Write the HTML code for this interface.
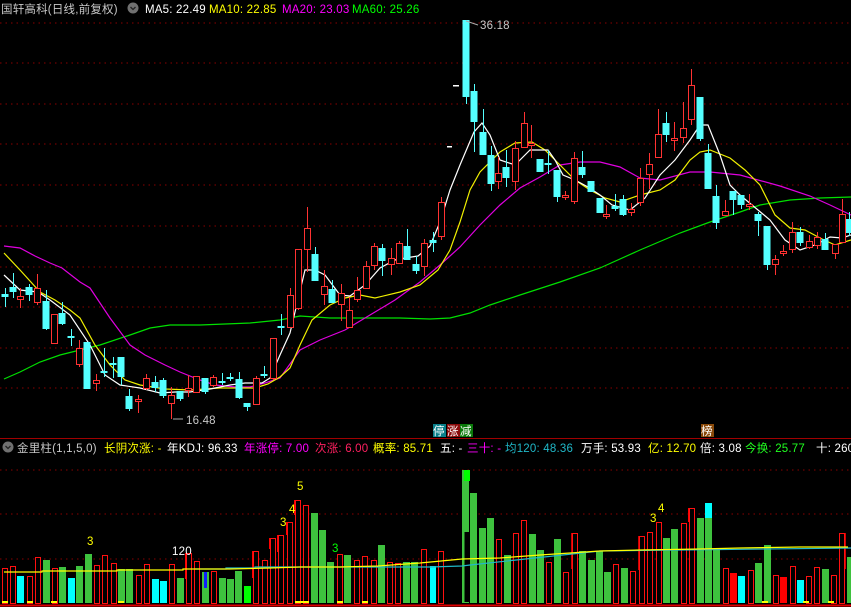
<!DOCTYPE html>
<html><head><meta charset="utf-8"><style>
html,body{margin:0;padding:0;background:#000;width:851px;height:607px;overflow:hidden}
svg{display:block}
text{font-family:"Liberation Sans","Noto Sans CJK SC",sans-serif;font-size:11.5px;letter-spacing:0.2px}
.r{fill:#000;stroke:#ff3232;stroke-width:1}
.c{fill:#54ffff}
.vr{fill:#000;stroke:#ff1010;stroke-width:1}
.vg{fill:#3ec23e}
.vc{fill:#00ffff}
.vf{fill:#ff0000}
.vd{fill:#d00000}
</style></head><body>
<svg width="851" height="607" viewBox="0 0 851 607" xmlns="http://www.w3.org/2000/svg">
<g stroke="#8a0000" stroke-dasharray="1.5,4" stroke-width="1">
<line x1="0" y1="23" x2="851" y2="23"/><line x1="0" y1="63" x2="851" y2="63"/><line x1="0" y1="104" x2="851" y2="104"/><line x1="0" y1="144" x2="851" y2="144"/><line x1="0" y1="185" x2="851" y2="185"/><line x1="0" y1="226" x2="851" y2="226"/><line x1="0" y1="267" x2="851" y2="267"/><line x1="0" y1="307" x2="851" y2="307"/><line x1="0" y1="348" x2="851" y2="348"/><line x1="0" y1="388" x2="851" y2="388"/>
<line x1="0" y1="470" x2="851" y2="470"/><line x1="0" y1="514" x2="851" y2="514"/><line x1="0" y1="559" x2="851" y2="559"/>
</g>
<line x1="0" y1="438.5" x2="851" y2="438.5" stroke="#a00000"/>
<line x1="0" y1="605.5" x2="851" y2="605.5" stroke="#e00000" stroke-width="2"/>

<polyline fill="none" stroke="#00e000" stroke-width="1.2" points="4,379 20,372 40,362 60,355 80,350 100,345 130,335 150,328 170,325 200,325 250,323 280,320 300,316 330,318 360,318 400,318 430,319 450,318 470,313 490,305 520,295 560,282 600,268 640,250 680,233 710,222 740,212 760,205 790,200 820,198 851,197"/>
<polyline fill="none" stroke="#e000e0" stroke-width="1.2" points="4,246 20,248 35,256 50,263 62,268 80,282 90,288 110,318 130,345 145,355 165,365 180,372 200,380 215,385 235,387 250,387 265,383 280,378 300,350 320,340 345,330 370,315 395,300 420,282 440,265 460,247 480,225 500,205 520,188 540,177 560,165 580,162 600,162 620,167 640,178 660,180 690,172 710,172 740,175 780,186 810,196 830,205 851,215"/>
<polyline fill="none" stroke="#f0f000" stroke-width="1.2" points="4,253 20,270 40,292 55,300 70,310 80,318 95,345 110,365 125,380 140,385 165,389 190,390 220,388 240,388 255,388 268,384 280,377 290,368 300,345 312,320 330,305 345,298 360,295 375,298 400,292 420,285 438,270 450,250 460,222 470,190 480,172 500,152 515,143 532,142 545,150 560,165 575,180 590,190 605,198 620,202 640,195 660,190 675,180 690,160 700,152 710,150 730,158 745,170 760,185 775,215 790,228 805,230 820,238 835,245 851,240"/>
<polyline fill="none" stroke="#ffffff" stroke-width="1.2" points="4,275 20,290 38,292 50,300 70,315 90,345 105,375 120,385 140,388 160,393 175,392 190,392 210,389 230,385 245,383 262,383 270,378 280,355 290,333 305,270 315,270 325,275 340,295 350,296 365,285 380,268 395,260 405,258 418,256 430,246 440,222 450,190 460,165 474,132 482,123 490,135 500,160 515,165 530,150 548,150 555,160 563,175 575,180 588,187 600,195 612,205 630,210 645,198 660,175 675,160 690,140 700,125 708,125 720,155 730,185 740,195 758,210 770,220 785,240 800,250 815,245 830,237 842,238 851,235"/>

<g transform="translate(0.5,0)">
<path stroke="#54ffff" stroke-width="1" d="M5,288V307M13,273V298M29,284V301M46,290V330M62,302V325M71,329V346M87,342V389M104,348V377M113,357V378M121,357V385M129,389V411M155,376V392M163,378V398M180,391V401M205,378V394M222,373V385M230,373V381M239,372V399M247,403V411M264,366V378M281,314V335M315,247V281M332,280V303M382,244V276M407,229V260M416,256V274M433,232V252M466,20V104M474,84V152M483,109V155M491,146V191M506,150V187M540,159V172M548,150V174M557,170V202M582,151V178M591,181V192M600,198V213M615,194V211M623,195V216M666,112V142M700,97V141M708,144V189M716,185V229M733,191V215M741,195V209M758,212V236M767,226V270M800,227V246M825,233V250M849,212V236"/>
<path stroke="#ff3232" stroke-width="1" d="M20,288V308M37,274V305M54,314V343M79,340V367M96,374V391M138,395V413M146,374V390M171,387V419M188,375V397M196,376V393M213,375V387M256,376V405M273,338V380M290,288V327M298,249V310M307,207V272M324,270V305M341,284V321M349,297V327M357,277V302M366,261V288M374,243V270M391,248V275M399,241V263M424,239V276M441,197V240M498,157V189M515,141V190M524,112V147M531,125V158M565,191V200M574,152V204M606,205V219M631,203V216M640,168V206M649,153V189M658,109V157M674,122V151M683,102V143M691,69V125M725,200V215M749,194V210M775,255V275M783,245V256M792,222V253M809,235V249M817,232V249M835,244V259M842,199V243"/>
</g>

<g class="c">
<rect x="1.5" y="294" width="7" height="3"/><rect x="9.5" y="287" width="7" height="5"/><rect x="25.5" y="287" width="7" height="8"/><rect x="42.5" y="301" width="7" height="28"/><rect x="58.5" y="313" width="7" height="11"/><rect x="67.5" y="336" width="7" height="2"/><rect x="83.5" y="342" width="7" height="47"/><rect x="100.5" y="371" width="7" height="2"/><rect x="109.5" y="363" width="7" height="2"/><rect x="117.5" y="357" width="7" height="20"/><rect x="125.5" y="396" width="7" height="13"/><rect x="151.5" y="382" width="7" height="6"/><rect x="159.5" y="380" width="7" height="16"/><rect x="176.5" y="391" width="7" height="8"/><rect x="201.5" y="378" width="7" height="14"/><rect x="218.5" y="381" width="7" height="2"/><rect x="226.5" y="377" width="7" height="2"/><rect x="235.5" y="379" width="7" height="19"/><rect x="243.5" y="403" width="7" height="4"/><rect x="260.5" y="374" width="7" height="2"/><rect x="277.5" y="326" width="7" height="2"/><rect x="311.5" y="254" width="7" height="27"/><rect x="328.5" y="289" width="7" height="14"/><rect x="378.5" y="248" width="7" height="13"/><rect x="403.5" y="246" width="7" height="14"/><rect x="412.5" y="264" width="7" height="7"/><rect x="429.5" y="240" width="7" height="3"/>
<rect x="462.5" y="20" width="7" height="77"/><rect x="470.5" y="91" width="7" height="31"/><rect x="479.5" y="132" width="7" height="23"/><rect x="487.5" y="155" width="7" height="29"/><rect x="502.5" y="167" width="7" height="11"/><rect x="536.5" y="159" width="7" height="13"/><rect x="544.5" y="163" width="7" height="2"/><rect x="553.5" y="170" width="7" height="27"/><rect x="578.5" y="167" width="7" height="8"/><rect x="587.5" y="181" width="7" height="11"/><rect x="596.5" y="198" width="7" height="15"/><rect x="611.5" y="206" width="7" height="3"/><rect x="619.5" y="199" width="7" height="16"/><rect x="662.5" y="123" width="7" height="12"/><rect x="696.5" y="97" width="7" height="42"/><rect x="704.5" y="153" width="7" height="36"/><rect x="712.5" y="196" width="7" height="27"/><rect x="729.5" y="191" width="7" height="9"/><rect x="737.5" y="195" width="7" height="10"/><rect x="754.5" y="214" width="7" height="7"/><rect x="763.5" y="226" width="7" height="39"/><rect x="796.5" y="232" width="7" height="11"/><rect x="821.5" y="239" width="7" height="11"/><rect x="845.5" y="219" width="7" height="14"/>
</g>
<g class="r" transform="translate(0.5,0.5)">
<rect x="17" y="296" width="6" height="3"/><rect x="34" y="288" width="6" height="14"/><rect x="51" y="314" width="6" height="29"/><rect x="76" y="348" width="6" height="16"/><rect x="93" y="380" width="6" height="3"/><rect x="135" y="399" width="6" height="2"/><rect x="143" y="378" width="6" height="10"/><rect x="168" y="395" width="6" height="8"/><rect x="185" y="388" width="6" height="2"/><rect x="193" y="376" width="6" height="16"/><rect x="210" y="377" width="6" height="8"/><rect x="253" y="378" width="6" height="26"/><rect x="270" y="338" width="6" height="40"/><rect x="287" y="295" width="6" height="32"/><rect x="295" y="249" width="6" height="59"/><rect x="304" y="228" width="6" height="21"/><rect x="321" y="286" width="6" height="8"/><rect x="338" y="293" width="6" height="11"/><rect x="346" y="310" width="6" height="17"/><rect x="354" y="290" width="6" height="9"/><rect x="363" y="266" width="6" height="22"/><rect x="371" y="246" width="6" height="19"/><rect x="388" y="258" width="6" height="6"/><rect x="396" y="243" width="6" height="20"/><rect x="421" y="243" width="6" height="23"/><rect x="438" y="202" width="6" height="34"/>
<rect x="495" y="173" width="6" height="8"/><rect x="512" y="148" width="6" height="33"/><rect x="521" y="123" width="6" height="24"/><rect x="528" y="143" width="6" height="2"/><rect x="562" y="195" width="6" height="2"/><rect x="571" y="158" width="6" height="43"/><rect x="603" y="214" width="6" height="2"/><rect x="628" y="209" width="6" height="3"/><rect x="637" y="178" width="6" height="24"/><rect x="646" y="164" width="6" height="10"/><rect x="655" y="134" width="6" height="23"/><rect x="671" y="138" width="6" height="2"/><rect x="680" y="128" width="6" height="9"/><rect x="688" y="85" width="6" height="34"/><rect x="722" y="211" width="6" height="4"/><rect x="746" y="204" width="6" height="2"/><rect x="772" y="259" width="6" height="5"/><rect x="780" y="251" width="6" height="2"/><rect x="789" y="232" width="6" height="17"/><rect x="806" y="241" width="6" height="6"/><rect x="814" y="237" width="6" height="8"/><rect x="832" y="244" width="6" height="9"/><rect x="839" y="214" width="6" height="28"/>
</g>
<g fill="#fff"><rect x="447" y="146" width="5" height="1.5"/><rect x="453" y="85" width="6" height="1.5"/></g>
<path d="M466,21 L478,25" stroke="#aaa" fill="none"/><text x="480" y="29" fill="#c8c8c8">36.18</text>
<path d="M173,419 L183,419" stroke="#aaa" fill="none"/><text x="186" y="424" fill="#c8c8c8">16.48</text>

<text x="1" y="13" fill="#c8c8c8">国轩高科(日线,前复权)</text>
<circle cx="133" cy="8" r="5.5" fill="#707070"/><path d="M130.5,7 L133,9.5 L135.5,7" stroke="#222" stroke-width="1.3" fill="none"/>
<text x="145" y="13" fill="#ffffff">MA5: 22.49</text>
<text x="209" y="13" fill="#ffff00">MA10: 22.85</text>
<text x="282" y="13" fill="#ff00ff">MA20: 23.03</text>
<text x="352" y="13" fill="#00ff00">MA60: 25.26</text>

<rect x="433" y="424" width="13" height="13" fill="#0a7f8a"/><text x="433" y="435" fill="#fff">停</text>
<rect x="447" y="424" width="13" height="13" fill="#8a0a0a"/><text x="447" y="435" fill="#fff">涨</text>
<rect x="460" y="424" width="13" height="13" fill="#0a7a0a"/><text x="460" y="435" fill="#fff">减</text>
<rect x="701" y="424" width="13" height="13" fill="#8a4a0a"/><text x="701" y="435" fill="#fff">榜</text>

<circle cx="8" cy="447" r="5.5" fill="#707070"/><path d="M5.5,446 L8,448.5 L10.5,446" stroke="#222" stroke-width="1.3" fill="none"/>
<text x="17" y="452" fill="#c8c8c8">金里柱(1,1,5,0)</text>
<text x="104" y="452" fill="#ffff00">长阴次涨: -</text>
<text x="167" y="452" fill="#ffffff">年KDJ: 96.33</text>
<text x="244" y="452" fill="#ff00ff">年涨停: 7.00</text>
<text x="315" y="452" fill="#ff2060">次涨: 6.00</text>
<text x="373" y="452" fill="#ffff00">概率: 85.71</text>
<text x="440" y="452" fill="#ffffff">五: -</text>
<text x="467" y="452" fill="#ff00ff">三十: -</text>
<text x="505" y="452" fill="#20b8c8">均120: 48.36</text>
<text x="581" y="452" fill="#ffffff">万手: 53.93</text>
<text x="648" y="452" fill="#ffff00">亿: 12.70</text>
<text x="700" y="452" fill="#ffffff">倍: 3.08</text>
<text x="745" y="452" fill="#20ff20">今换: 25.77</text>
<text x="816" y="452" fill="#ffffff">十: 260</text>

<g class="vg">
<rect x="43" y="560" width="7" height="43"/><rect x="59" y="567" width="7" height="36"/><rect x="76" y="566" width="7" height="37"/><rect x="85" y="554" width="7" height="49"/><rect x="118" y="569" width="7" height="34"/><rect x="126" y="569" width="7" height="34"/><rect x="177" y="578" width="7" height="25"/><rect x="202" y="572" width="7" height="31"/><rect x="219" y="578" width="7" height="25"/><rect x="227" y="579" width="7" height="24"/><rect x="235" y="571" width="7" height="32"/><rect x="311" y="513" width="7" height="90"/><rect x="319" y="530" width="7" height="73"/><rect x="327" y="562" width="7" height="41"/><rect x="344" y="555" width="7" height="48"/><rect x="378" y="545" width="7" height="58"/><rect x="403" y="562" width="7" height="41"/><rect x="411" y="562" width="7" height="41"/>
<rect x="462" y="470" width="7" height="133"/><rect x="470" y="493" width="7" height="110"/><rect x="479" y="528" width="7" height="75"/><rect x="487" y="518" width="7" height="85"/><rect x="504" y="555" width="7" height="48"/><rect x="529" y="534" width="7" height="69"/><rect x="537" y="550" width="7" height="53"/><rect x="554" y="539" width="7" height="64"/><rect x="579" y="551" width="7" height="52"/><rect x="588" y="560" width="7" height="43"/><rect x="596" y="551" width="7" height="52"/><rect x="604" y="572" width="7" height="31"/><rect x="621" y="568" width="7" height="35"/><rect x="663" y="538" width="7" height="65"/><rect x="671" y="529" width="7" height="74"/><rect x="697" y="518" width="7" height="85"/><rect x="705" y="518" width="7" height="85"/><rect x="713" y="550" width="7" height="53"/><rect x="755" y="563" width="7" height="40"/><rect x="764" y="545" width="7" height="58"/><rect x="822" y="569" width="7" height="34"/><rect x="847" y="557" width="4" height="46"/>
</g>
<rect x="464" y="470" width="6" height="11" fill="#00ff00"/><rect x="464.5" y="532" width="5" height="70" fill="#000"/>
<rect x="705" y="503" width="7" height="15" fill="#00ffff"/>
<rect x="244" y="586" width="7" height="17" fill="#00ff00"/>
<rect x="204" y="572" width="3" height="16" fill="#1020ff"/>
<g class="vc">
<rect x="17" y="576" width="7" height="27"/><rect x="68" y="578" width="7" height="25"/><rect x="152" y="579" width="7" height="24"/><rect x="160" y="581" width="7" height="22"/><rect x="430" y="566" width="6" height="37"/><rect x="738" y="576" width="7" height="27"/><rect x="797" y="580" width="7" height="23"/>
</g>
<g class="vf">
<rect x="185" y="553" width="7" height="26"/><rect x="252" y="551" width="7" height="27"/><rect x="269" y="538" width="7" height="11"/><rect x="277" y="535" width="7" height="17"/><rect x="286" y="522" width="7" height="13"/><rect x="294" y="500" width="7" height="15"/><rect x="688" y="508" width="7" height="14"/><rect x="730" y="573" width="7" height="30"/><rect x="780" y="577" width="7" height="26"/>
</g>
<g class="vd"><rect x="571" y="533" width="7" height="36"/><rect x="638" y="536" width="7" height="34"/><rect x="839" y="533" width="7" height="36"/></g>
<g class="vr" transform="translate(0.5,0.5)">
<rect x="2" y="568" width="5" height="35"/><rect x="10" y="566" width="5" height="37"/><rect x="27" y="576" width="5" height="27"/><rect x="35" y="557" width="5" height="46"/><rect x="52" y="568" width="5" height="35"/><rect x="94" y="565" width="5" height="38"/><rect x="102" y="555" width="5" height="48"/><rect x="111" y="563" width="5" height="40"/><rect x="136" y="575" width="5" height="28"/><rect x="144" y="564" width="5" height="39"/><rect x="169" y="564" width="5" height="39"/><rect x="186" y="553" width="5" height="50"/><rect x="194" y="561" width="5" height="42"/><rect x="211" y="571" width="5" height="32"/><rect x="253" y="551" width="5" height="52"/><rect x="262" y="560" width="5" height="43"/><rect x="270" y="538" width="5" height="65"/><rect x="278" y="535" width="5" height="68"/><rect x="287" y="522" width="5" height="81"/><rect x="295" y="500" width="5" height="103"/><rect x="303" y="505" width="5" height="98"/><rect x="337" y="554" width="5" height="49"/><rect x="354" y="560" width="5" height="43"/><rect x="362" y="556" width="5" height="47"/><rect x="371" y="560" width="5" height="43"/><rect x="387" y="562" width="5" height="41"/><rect x="395" y="563" width="5" height="40"/><rect x="421" y="549" width="5" height="54"/>
<rect x="438" y="551" width="5" height="52"/><rect x="496" y="539" width="5" height="64"/><rect x="513" y="533" width="5" height="70"/><rect x="521" y="520" width="5" height="83"/><rect x="546" y="562" width="5" height="41"/><rect x="563" y="572" width="5" height="31"/><rect x="572" y="533" width="5" height="70"/><rect x="613" y="564" width="5" height="39"/><rect x="630" y="571" width="5" height="32"/><rect x="639" y="536" width="5" height="67"/><rect x="647" y="532" width="5" height="71"/><rect x="656" y="522" width="5" height="81"/><rect x="681" y="523" width="5" height="80"/><rect x="689" y="508" width="5" height="95"/><rect x="723" y="568" width="5" height="35"/><rect x="748" y="570" width="5" height="33"/><rect x="773" y="575" width="5" height="28"/><rect x="790" y="566" width="5" height="37"/><rect x="806" y="576" width="5" height="27"/><rect x="814" y="567" width="5" height="36"/><rect x="831" y="575" width="5" height="28"/><rect x="839" y="533" width="5" height="70"/>
</g>
<polyline fill="none" stroke="#20b8c8" stroke-width="1.2" points="195,569 226,569 226,568 255,568 255,567 430,567 462,566 470,565 600,551 851,548"/>
<polyline fill="none" stroke="#ffff00" stroke-width="1.2" points="4,572 42,572 42,571 117,571 117,570 183,570 183,569 230,569 270,568 300,567 340,567 378,566 420,563 462,559 500,558 540,555 600,551 640,550 700,549 740,548 800,547 848,547"/>
<g fill="#ffff00"><rect x="2" y="601" width="6" height="2"/><rect x="27" y="601" width="6" height="2"/><rect x="51" y="601" width="6" height="2"/><rect x="118" y="601" width="6" height="2"/><rect x="295" y="601" width="14" height="2"/><rect x="337" y="601" width="6" height="2"/><rect x="362" y="601" width="6" height="2"/><rect x="762" y="601" width="6" height="2"/><rect x="803" y="601" width="6" height="2"/><rect x="828" y="601" width="6" height="2"/></g>
<text x="87" y="545" fill="#ffff00">3</text>
<text x="172" y="555" fill="#ffffff">120</text>
<text x="280" y="526" fill="#ffff00">3</text>
<text x="289" y="513" fill="#ffff00">4</text>
<text x="297" y="490" fill="#ffff00">5</text>
<text x="332" y="552" fill="#00ff00">3</text>
<text x="650" y="522" fill="#ffff00">3</text>
<text x="658" y="512" fill="#ffff00">4</text>
</svg>
</body></html>
